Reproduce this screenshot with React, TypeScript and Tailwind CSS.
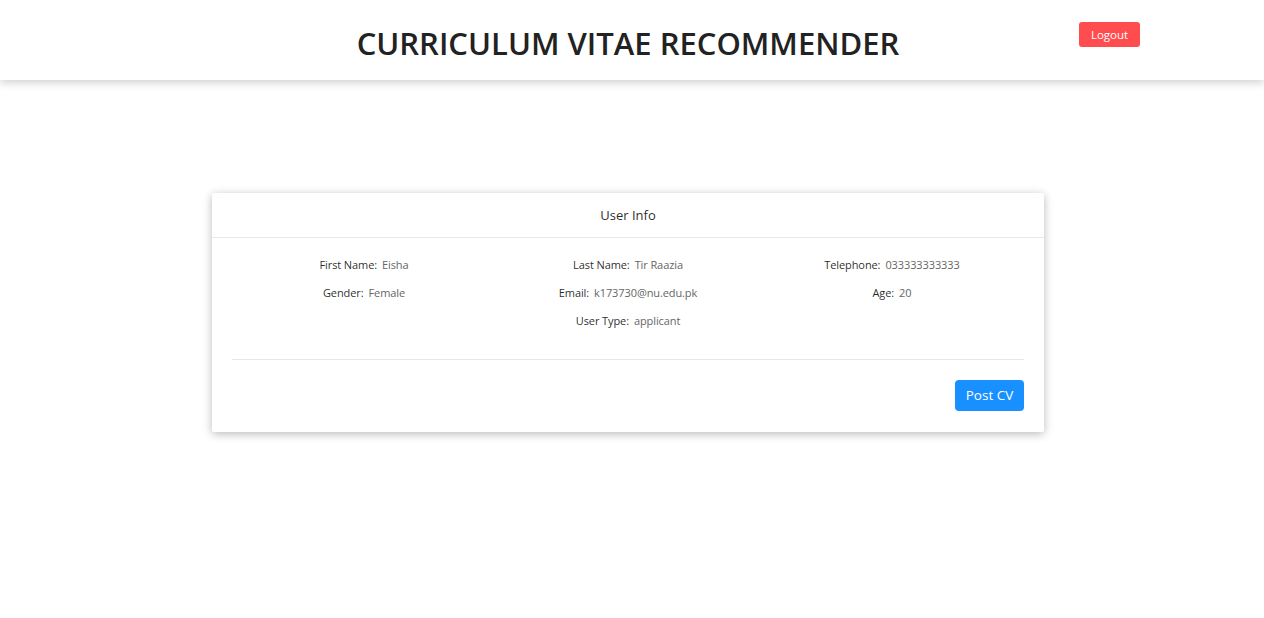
import React from "react";

const rows: [string, string][][] = [
  [
    ["First Name", "Eisha"],
    ["Last Name", "Tir Raazia"],
    ["Telephone", "033333333333"],
  ],
  [
    ["Gender", "Female"],
    ["Email", "k173730@nu.edu.pk"],
    ["Age", "20"],
  ],
];

function Item({ label, value }: { label: string; value: string }) {
  return (
    <div className="flex h-[28px] items-center justify-center text-[11px] leading-[20px] tracking-[-0.1px]">
      <span className="text-[rgba(0,0,0,0.85)]">{label}</span>
      <span className="mr-[5px] text-[rgba(0,0,0,0.85)]">:</span>
      <span className="text-[#666666]">{value}</span>
    </div>
  );
}

export default function App() {
  return (
    <div
      className="min-h-[618px] w-full bg-white"
      style={{ fontFamily: '"Open Sans", "Noto Sans", sans-serif' }}
    >
      <header className="h-[80px] w-full bg-white shadow-[0_3px_8px_rgba(0,0,0,0.18)]">
        <div className="relative flex h-full w-[1256px] items-center justify-center pt-[6px]">
          <h1 className="text-[31px] font-semibold leading-none text-[#222]">
            CURRICULUM VITAE RECOMMENDER
          </h1>
          <button className="absolute left-[1079px] top-[22px] flex h-[25px] w-[61px] items-center justify-center rounded-[3px] bg-[#ff4d4f] text-[11.5px] text-white">
            Logout
          </button>
        </div>
      </header>

      <main className="flex w-[1256px] justify-center pt-[113px]">
        <div className="w-[832px] rounded-[2px] bg-white shadow-[0_2px_10px_rgba(0,0,0,0.28)]">
          <div className="flex h-[45px] items-center justify-center border-b border-[#e8e8e8] pt-[2px] text-[13px] text-[rgba(0,0,0,0.85)]">
            User Info
          </div>
          <div className="px-[20px] pt-[13px]">
            {rows.map((r, i) => (
              <div key={i} className="grid grid-cols-3">
                {r.map(([l, v]) => (
                  <Item key={l} label={l} value={v} />
                ))}
              </div>
            ))}
            <div className="grid grid-cols-3">
              <div />
              <Item label="User Type" value="applicant" />
              <div />
            </div>
            <div className="mt-[24px] border-t border-[#e8e8e8]" />
            <div className="flex justify-end pb-[21px] pt-[20px]">
              <button className="flex h-[31px] w-[69px] items-center justify-center rounded-[4px] bg-[#1890ff] text-[13.5px] text-white">
                Post CV
              </button>
            </div>
          </div>
        </div>
      </main>
    </div>
  );
}
